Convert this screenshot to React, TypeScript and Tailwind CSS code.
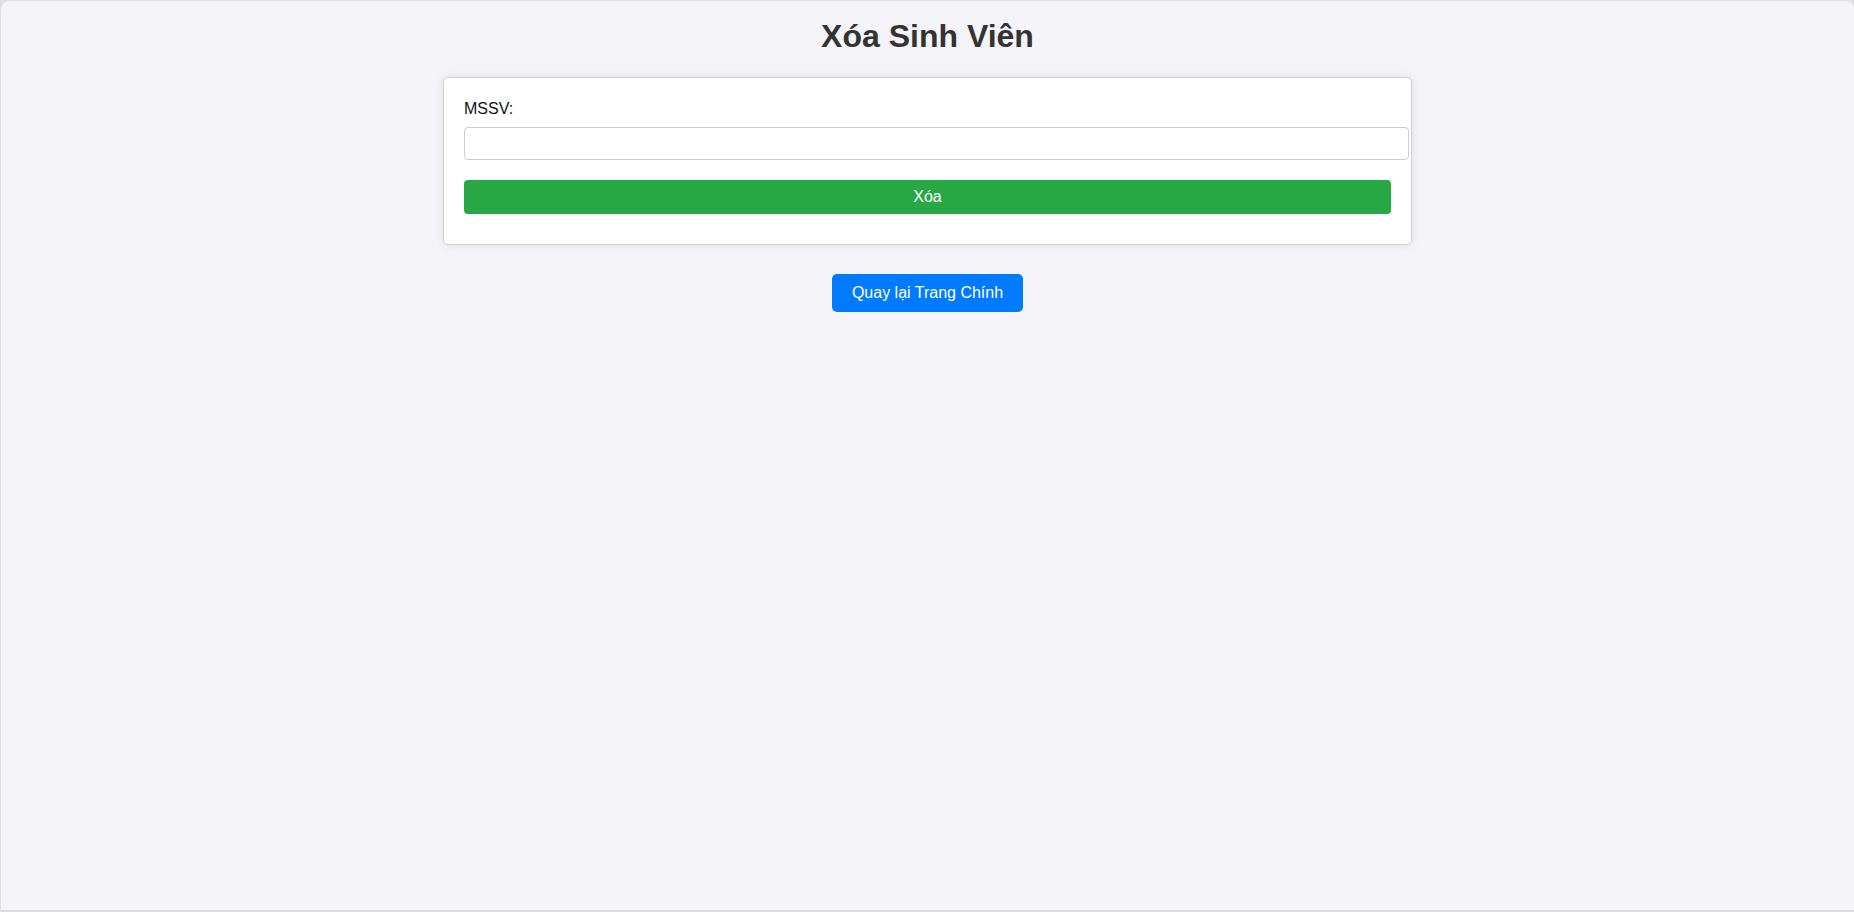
export default function App() {
  return (
    <div className="flex h-[912px] w-full flex-col bg-[#dedee3] pl-[1px] pt-[1px] font-['Liberation_Sans',Arial,sans-serif]">
      <div className="flex flex-1 flex-col items-center rounded-t-[8px] bg-[#f4f4f9]">
        <h1 className="mt-[17px] text-[32px] leading-[37px] font-bold text-[#333]">Xóa Sinh Viên</h1>

        <form className="mt-[22px] w-[969px] rounded-[5px] border border-[#cfcfd4] bg-white px-[20px] pt-[20px] pb-[30px] shadow-[0_0_10px_rgba(0,0,0,0.1)]">
          <label className="block text-[16px] leading-[21px] text-[#111]">MSSV:</label>
          <input
            type="text"
            className="mt-[8px] block h-[33px] w-[calc(100%+18px)] rounded-[4px] border border-[#ccc] bg-white px-[8px] text-[13px] outline-none"
          />
          <button
            type="button"
            className="mt-[20px] block h-[34px] w-full rounded-[4px] bg-[#28a745] text-[16px] text-white"
          >
            Xóa
          </button>
        </form>

        <a
          href="#"
          className="mt-[29px] inline-block h-[38px] rounded-[5px] bg-[#007bff] px-[20px] text-[16px] leading-[38px] text-white"
        >
          Quay lại Trang Chính
        </a>
      </div>
      <div className="h-[2px] bg-[#dcdce0]" />
    </div>
  )
}
